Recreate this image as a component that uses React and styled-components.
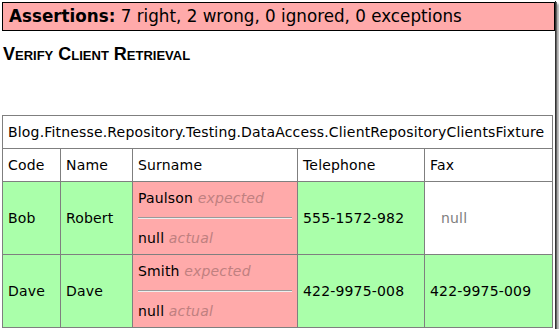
import React from 'react';
import styled, { createGlobalStyle } from 'styled-components';

const GlobalStyle = createGlobalStyle`
  html, body { margin: 0; padding: 0; background: #fff; }
  body { font-family: "DejaVu Sans", Verdana, sans-serif; color: #000; }
`;

const Frame = styled.div`
  box-sizing: border-box;
  width: 555px;
  height: 329px;
  padding: 2px 0 0 2px;
  background: #fff;
  box-shadow: 1px 1px 0 #333, 2px 2px 0 #666, 4px 4px 2px rgba(0, 0, 0, 0.35);
  overflow: hidden;
`;

const Banner = styled.div`
  box-sizing: border-box;
  height: 29px;
  border: 1px solid #000;
  background: #ffaaaa;
  padding: 0 6px;
  font-size: 16.75px;
  line-height: 27px;
  white-space: nowrap;
`;

const Strong = styled.b`
  font-weight: bold;
`;

const Title = styled.h3`
  margin: 13px 0 0 1px;
  font-family: "Liberation Sans", Arial, sans-serif;
  font-size: 18px;
  font-weight: bold;
  font-variant: small-caps;
  line-height: 21px;
`;

const Grid = styled.table`
  margin-top: 50px;
  border-collapse: collapse;
  table-layout: fixed;
  width: 550px;
  font-size: 14px;
  line-height: 16px;
  letter-spacing: 0.17px;
`;

const bg = { pass: '#aaffaa', fail: '#ffaaaa', none: '#ffffff' };

const Cell = styled.td`
  border: 1px solid #7f7f7f;
  padding: 8px 5px;
  vertical-align: middle;
  white-space: nowrap;
  overflow: hidden;
  background: ${(p) => bg[p.$status || 'none']};
`;

const Label = styled.span`
  font-style: italic;
  color: #c08080;
`;

const Grey = styled.span`
  color: #808080;
  margin-left: 11px;
`;

const Rule = styled.hr`
  height: 0;
  margin: 11px 0;
  border: none;
  border-top: 1px solid #9a9a9a;
  border-bottom: 1px solid #eeeeee;
`;

const rows = [
  { code: 'Bob', name: 'Robert', expected: 'Paulson', tel: '555-1572-982', fax: null },
  { code: 'Dave', name: 'Dave', expected: 'Smith', tel: '422-9975-008', fax: '422-9975-009' },
];

const widths = [58, 72, 165, 127, 128];

export default function App() {
  return (
    <>
      <GlobalStyle />
      <Frame>
        <Banner>
          <Strong>Assertions:</Strong> 7 right, 2 wrong, 0 ignored, 0 exceptions
        </Banner>
        <Title>Verify Client Retrieval</Title>
        <Grid>
          <colgroup>
            {widths.map((w, i) => (
              <col key={i} style={{ width: w }} />
            ))}
          </colgroup>
          <tbody>
            <tr>
              <Cell colSpan={5}>Blog.Fitnesse.Repository.Testing.DataAccess.ClientRepositoryClientsFixture</Cell>
            </tr>
            <tr>
              <Cell>Code</Cell>
              <Cell>Name</Cell>
              <Cell>Surname</Cell>
              <Cell>Telephone</Cell>
              <Cell>Fax</Cell>
            </tr>
            {rows.map((r) => (
              <tr key={r.code + r.tel}>
                <Cell $status="pass">{r.code}</Cell>
                <Cell $status="pass">{r.name}</Cell>
                <Cell $status="fail">
                  {r.expected} <Label>expected</Label>
                  <Rule />
                  null <Label>actual</Label>
                </Cell>
                <Cell $status="pass">{r.tel}</Cell>
                {r.fax ? (
                  <Cell $status="pass">{r.fax}</Cell>
                ) : (
                  <Cell>
                    <Grey>null</Grey>
                  </Cell>
                )}
              </tr>
            ))}
          </tbody>
        </Grid>
      </Frame>
    </>
  );
}
